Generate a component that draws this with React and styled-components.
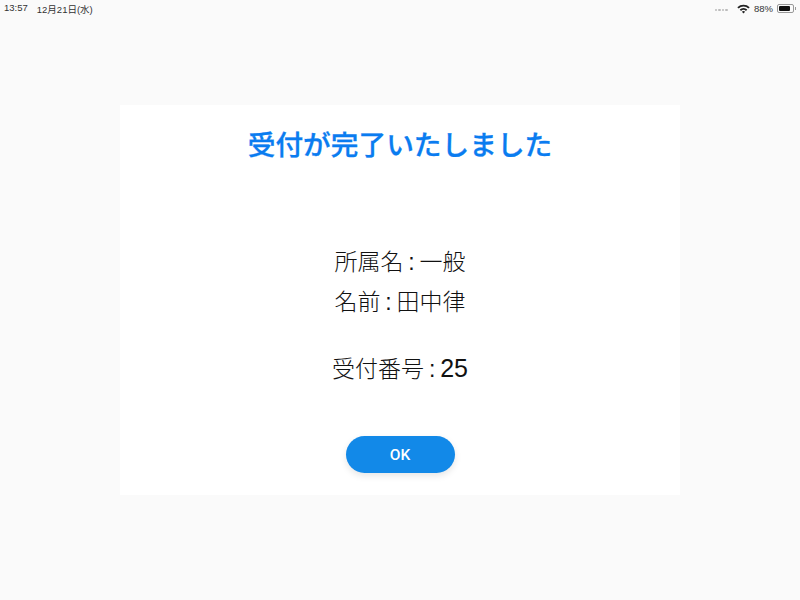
import React from "react";
import styled, { createGlobalStyle } from "styled-components";

const GlobalStyle = createGlobalStyle`
    html, body {
        margin: 0;
        padding: 0;
        background-color: #fafafa;
    }
    body {
        font-family: "Liberation Sans", "Noto Sans CJK JP", sans-serif;
    }
`

function WifiIcon() {
    return (
        <svg width="13" height="10" viewBox="0 0 13 10">
            <path d="M0.3 3.2 A9 9 0 0 1 12.7 3.2 L11.4 4.6 A7 7 0 0 0 1.6 4.6 Z" fill="#222" />
            <path d="M2.7 5.5 A5.5 5.5 0 0 1 10.3 5.5 L9 6.9 A3.6 3.6 0 0 0 4 6.9 Z" fill="#222" />
            <path d="M4.9 7.7 A2.4 2.4 0 0 1 8.1 7.7 L6.5 9.5 Z" fill="#222" />
        </svg>
    )
}

function App() {
    return (
        <Page>
            <GlobalStyle />
            <StatusBar>
                <StatusLeft>
                    <span>13:57</span>
                    <span>12月21日(水)</span>
                </StatusLeft>
                <StatusRight>
                    <SignalDots>
                        <Dot /><Dot /><Dot /><Dot />
                    </SignalDots>
                    <WifiIcon />
                    <span>88%</span>
                    <Battery>
                        <BatteryBody>
                            <BatteryFill />
                        </BatteryBody>
                        <BatteryCap />
                    </Battery>
                </StatusRight>
            </StatusBar>
            <Content>
                <Card>
                    <Title>受付が完了いたしました</Title>
                    <InfoBlock>
                        <InfoLine>所属名 : 一般</InfoLine>
                        <InfoLine>名前 : 田中律</InfoLine>
                    </InfoBlock>
                    <Receipt>受付番号 : <ReceiptNumber>25</ReceiptNumber></Receipt>
                    <OkButton>OK</OkButton>
                </Card>
            </Content>
        </Page>
    )
}

export default App;

const Page = styled.div`
    width: 800px;
    height: 600px;
    overflow: hidden;
    background-color: #fafafa;
    display: flex;
    flex-direction: column;
`
const StatusBar = styled.div`
    height: 17px;
    flex-shrink: 0;
    padding: 0 4px;
    display: flex;
    justify-content: space-between;
    align-items: center;
    font-size: 9.5px;
    color: #333;
`
const StatusLeft = styled.div`
    display: flex;
    gap: 9px;
`
const StatusRight = styled.div`
    display: flex;
    align-items: center;
    gap: 4px;
`
const SignalDots = styled.div`
    display: flex;
    gap: 1px;
    margin-right: 5px;
    padding-top: 3px;
`
const Dot = styled.div`
    width: 2.5px;
    height: 2.5px;
    border-radius: 50%;
    background-color: #bbb;
`
const Battery = styled.div`
    display: flex;
    align-items: center;
    gap: 1px;
`
const BatteryBody = styled.div`
    width: 17px;
    height: 9px;
    padding: 1px;
    border: 1px solid #999;
    border-radius: 2px;
    box-sizing: border-box;
`
const BatteryFill = styled.div`
    width: 88%;
    height: 100%;
    background-color: #111;
    border-radius: 1px;
`
const BatteryCap = styled.div`
    width: 1px;
    height: 3px;
    background-color: #999;
`
const Content = styled.div`
    padding-top: 88px;
    display: flex;
    justify-content: center;
`
const Card = styled.div`
    width: 560px;
    height: 390px;
    background-color: #fff;
    box-sizing: border-box;
    padding-top: 19px;
    display: flex;
    flex-direction: column;
    align-items: center;
`
const Title = styled.h1`
    margin: 0;
    font-family: "Noto Sans CJK JP", sans-serif;
    font-size: 27.7px;
    line-height: 38px;
    font-weight: 500;
    -webkit-text-stroke: 0.3px #0a7cf0;
    color: #0a7cf0;
`
const InfoBlock = styled.div`
    margin-top: 84px;
    display: flex;
    flex-direction: column;
    gap: 8px;
`
const InfoLine = styled.div`
    font-size: 23px;
    line-height: 32px;
    font-weight: 300;
    word-spacing: -1.5px;
    color: #111;
    text-align: center;
`
const Receipt = styled.div`
    margin-top: 34px;
    font-size: 23px;
    line-height: 32px;
    font-weight: 300;
    word-spacing: -1.5px;
    color: #111;
`
const ReceiptNumber = styled.span`
    font-size: 25px;
`
const OkButton = styled.button`
    margin-top: 51px;
    width: 109px;
    height: 37px;
    border: none;
    border-radius: 19px;
    background-color: #1289e8;
    color: #fff;
    font-family: Roboto, sans-serif;
    font-size: 15.5px;
    font-weight: 500;
    box-shadow: 0 3px 7px rgba(0, 0, 0, 0.1);
`
